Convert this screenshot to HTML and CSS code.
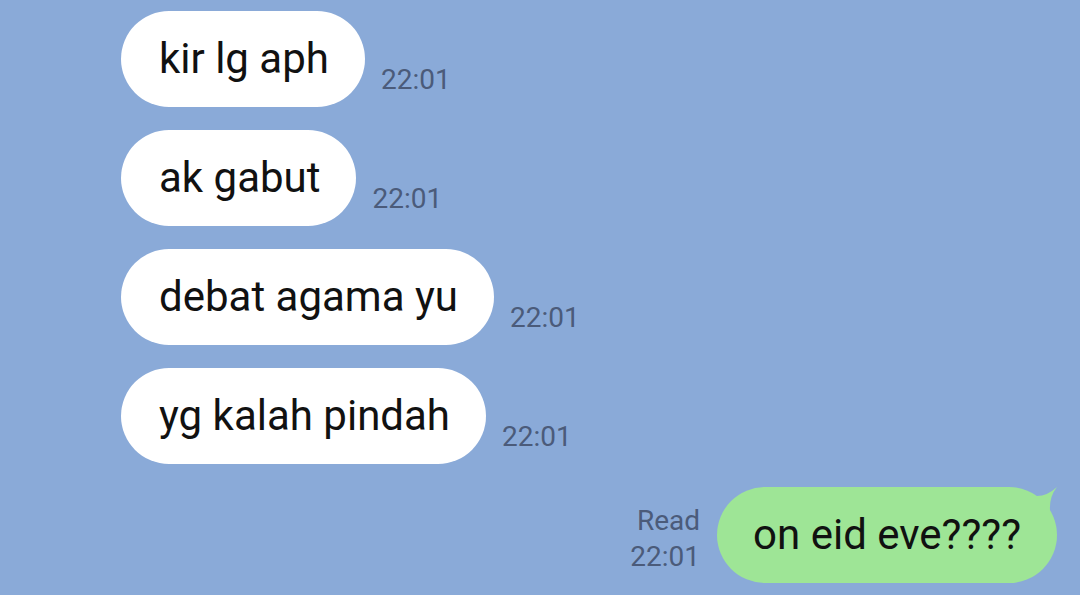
FILE: index.html
```html
<!DOCTYPE html>
<html lang="id">
<head>
    <meta charset="UTF-8">
    <title>Chat</title>
    <link rel="stylesheet" href="styles.css">
</head>
<body>
<div class="chat">
    <div class="row">
        <div class="bubble">kir lg aph</div>
        <div class="time">22:01</div>
    </div>
    <div class="row">
        <div class="bubble">ak gabut</div>
        <div class="time">22:01</div>
    </div>
    <div class="row">
        <div class="bubble">debat agama yu</div>
        <div class="time">22:01</div>
    </div>
    <div class="row">
        <div class="bubble">yg kalah pindah</div>
        <div class="time">22:01</div>
    </div>
    <div class="row mine">
        <div class="time">Read<br>22:01</div>
        <div class="bubble">on eid eve????</div>
    </div>
</div>
</body>
</html>
```
FILE: styles.css
```css
html, body {
    width: 100%;
    height: 100%;
    margin: 0;
    padding: 0;
    overflow: hidden;
}

body {
    background: #8aaad8;
    font-family: Roboto, "Noto Sans", sans-serif;
}

.chat {
    display: flex;
    flex-direction: column;
    gap: 23px;
    padding: 11px 23px 0 121px;
}

.row {
    display: flex;
    align-items: flex-end;
}

.bubble {
    position: relative;
    background: #fff;
    color: #111;
    font-size: 42px;
    line-height: 46px;
    padding: 25px 36px 25px 38px;
    border-radius: 48px;
}

.time {
    color: #4b5b7a;
    font-size: 28px;
    line-height: 36px;
    margin: 0 0 9px 16px;
}

.row.mine {
    justify-content: flex-end;
}

.row.mine .time {
    text-align: right;
    margin: 0 17px 8px 0;
}

.row.mine .bubble {
    background: #9ee596;
    padding: 25px 36px;
}

/* little tail on the top right corner */
.row.mine .bubble::after {
    content: "";
    position: absolute;
    top: -2px;
    right: -1px;
    width: 28px;
    height: 26px;
    background: #9ee596;
    clip-path: path("M0 10 Q 14 14 27 2 Q 19 12 20 26 L 0 26 Z");
}
```
